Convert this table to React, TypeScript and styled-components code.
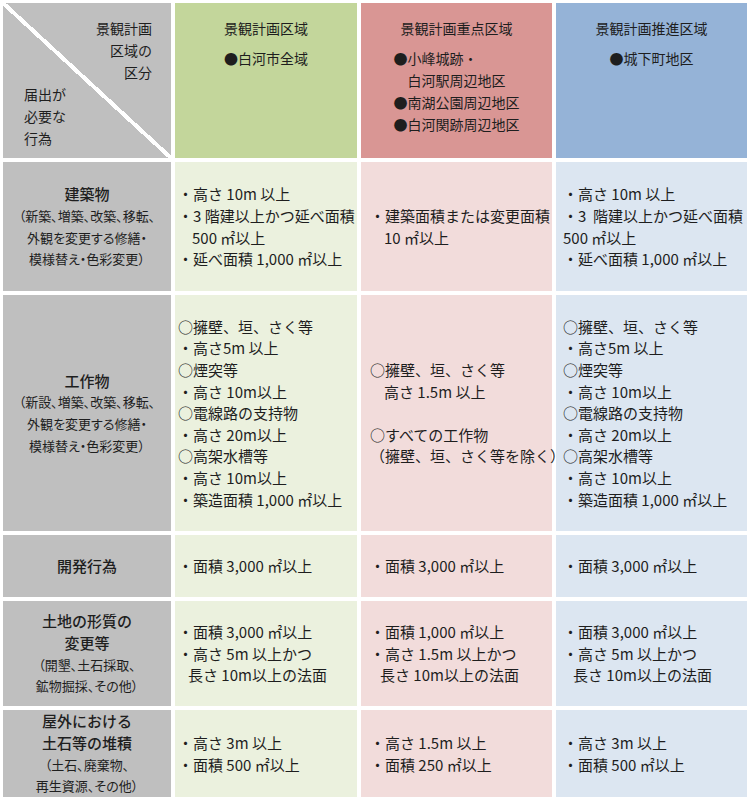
import React from "react";
import styled, { createGlobalStyle } from "styled-components";

const GlobalStyle = createGlobalStyle`
  html, body { margin: 0; padding: 0; background: #ffffff; }
  body {
    font-family: "Noto Sans CJK JP", "Noto Sans", sans-serif;
    color: #1e1e1e;
  }
`;

type Tone = "green" | "pink" | "blue";

const headTone: Record<Tone, string> = {
  green: "#c3d69b",
  pink: "#d99694",
  blue: "#95b3d7",
};
const bodyTone: Record<Tone, string> = {
  green: "#ebf1de",
  pink: "#f2dcdb",
  blue: "#dce6f1",
};
const padLeft: Record<Tone, number> = { green: 3, pink: 9, blue: 7 };

const Table = styled.div`
  display: grid;
  grid-template-columns: 168px 182px 191px 191px;
  grid-template-rows: 155px 129px 236px 62px 105px 87px;
  gap: 4px;
  padding: 3px;
  width: 750px;
  box-sizing: border-box;
`;

const CornerCell = styled.div`
  background: linear-gradient(
    to top right,
    #bfbfbf calc(50% - 2px),
    #ffffff calc(50% - 2px),
    #ffffff calc(50% + 2px),
    #bfbfbf calc(50% + 2px)
  );
  display: flex;
  flex-direction: column;
  justify-content: space-between;
  padding: 14px 19px 15px 21px;
  font-size: 14px;
  line-height: 22px;
`;

const CornerTop = styled.div`
  text-align: right;
`;

const CornerBottom = styled.div`
  text-align: left;
`;

const HeadCell = styled.div<{ $tone: Tone }>`
  background: ${(p) => headTone[p.$tone]};
  display: flex;
  flex-direction: column;
  align-items: center;
  padding-top: 14px;
  font-size: 14px;
  line-height: 22px;
`;

const HeadTitle = styled.div`
  margin-bottom: 8px;
`;

const HeadList = styled.div`
  text-align: left;
`;

const Line = styled.div<{ $indent?: number }>`
  padding-left: ${(p) => p.$indent ?? 0}px;
  white-space: pre;
  min-height: 21.6px;
`;

const LabelCell = styled.div`
  background: #bfbfbf;
  display: flex;
  flex-direction: column;
  align-items: center;
  justify-content: center;
  text-align: center;
`;

const LabelMain = styled.div`
  font-size: 15px;
  font-weight: 500;
  line-height: 21.6px;
`;

const LabelSub = styled.div`
  font-size: 13px;
  line-height: 21.6px;
  font-feature-settings: "palt";
`;

const BodyCell = styled.div<{ $tone: Tone }>`
  background: ${(p) => bodyTone[p.$tone]};
  display: flex;
  flex-direction: column;
  justify-content: center;
  padding-left: ${(p) => padLeft[p.$tone]}px;
  font-size: 15px;
  line-height: 21.6px;
`;

type L = string | { t: string; i: number };

const heads: { tone: Tone; title: string; items: L[] }[] = [
  { tone: "green", title: "景観計画区域", items: ["●白河市全域"] },
  {
    tone: "pink",
    title: "景観計画重点区域",
    items: ["●小峰城跡・", { t: "白河駅周辺地区", i: 14 }, "●南湖公園周辺地区", "●白河関跡周辺地区"],
  },
  { tone: "blue", title: "景観計画推進区域", items: ["●城下町地区"] },
];

const koSaku: L[] = [
  "○擁壁、垣、さく等",
  "・高さ5m 以上",
  "○煙突等",
  "・高さ 10m以上",
  "○電線路の支持物",
  "・高さ 20m以上",
  "○高架水槽等",
  "・高さ 10m以上",
  "・築造面積 1,000 ㎡以上",
];

const rows: { main: string[]; sub: string[]; cells: [L[], L[], L[]] }[] = [
  {
    main: ["建築物"],
    sub: ["（新築、増築、改築、移転、", "外観を変更する修繕・", "模様替え・色彩変更）"],
    cells: [
      ["・高さ 10m 以上", "・3 階建以上かつ延べ面積", { t: "500 ㎡以上", i: 14 }, "・延べ面積 1,000 ㎡以上"],
      ["・建築面積または変更面積", { t: "10 ㎡以上", i: 14 }],
      ["・高さ 10m 以上", "・3  階建以上かつ延べ面積", "500 ㎡以上", "・延べ面積 1,000 ㎡以上"],
    ],
  },
  {
    main: ["工作物"],
    sub: ["（新設、増築、改築、移転、", "外観を変更する修繕・", "模様替え・色彩変更）"],
    cells: [
      koSaku,
      ["○擁壁、垣、さく等", { t: "高さ 1.5m 以上", i: 14 }, "", "○すべての工作物", "（擁壁、垣、さく等を除く）"],
      koSaku,
    ],
  },
  {
    main: ["開発行為"],
    sub: [],
    cells: [["・面積 3,000 ㎡以上"], ["・面積 3,000 ㎡以上"], ["・面積 3,000 ㎡以上"]],
  },
  {
    main: ["土地の形質の", "変更等"],
    sub: ["（開墾、土石採取、", "鉱物掘採、その他）"],
    cells: [
      ["・面積 3,000 ㎡以上", "・高さ 5m 以上かつ", { t: "長さ 10m以上の法面", i: 10 }],
      ["・面積 1,000 ㎡以上", "・高さ 1.5m 以上かつ", { t: "長さ 10m以上の法面", i: 10 }],
      ["・面積 3,000 ㎡以上", "・高さ 5m 以上かつ", { t: "長さ 10m以上の法面", i: 10 }],
    ],
  },
  {
    main: ["屋外における", "土石等の堆積"],
    sub: ["（土石、廃棄物、", "再生資源、その他）"],
    cells: [
      ["・高さ 3m 以上", "・面積 500 ㎡以上"],
      ["・高さ 1.5m 以上", "・面積 250 ㎡以上"],
      ["・高さ 3m 以上", "・面積 500 ㎡以上"],
    ],
  },
];

const tones: Tone[] = ["green", "pink", "blue"];

const renderLine = (l: L, k: number) =>
  typeof l === "string" ? (
    <Line key={k}>{l}</Line>
  ) : (
    <Line key={k} $indent={l.i}>
      {l.t}
    </Line>
  );

export default function App() {
  return (
    <>
      <GlobalStyle />
      <Table>
        <CornerCell>
          <CornerTop>
            <div>景観計画</div>
            <div>区域の</div>
            <div>区分</div>
          </CornerTop>
          <CornerBottom>
            <div>届出が</div>
            <div>必要な</div>
            <div>行為</div>
          </CornerBottom>
        </CornerCell>
        {heads.map((h) => (
          <HeadCell key={h.tone} $tone={h.tone}>
            <HeadTitle>{h.title}</HeadTitle>
            <HeadList>{h.items.map(renderLine)}</HeadList>
          </HeadCell>
        ))}
        {rows.map((r, ri) => (
          <React.Fragment key={ri}>
            <LabelCell>
              {r.main.map((m) => (
                <LabelMain key={m}>{m}</LabelMain>
              ))}
              {r.sub.map((s) => (
                <LabelSub key={s}>{s}</LabelSub>
              ))}
            </LabelCell>
            {r.cells.map((c, ci) => (
              <BodyCell key={ci} $tone={tones[ci]}>
                {c.map(renderLine)}
              </BodyCell>
            ))}
          </React.Fragment>
        ))}
      </Table>
    </>
  );
}
